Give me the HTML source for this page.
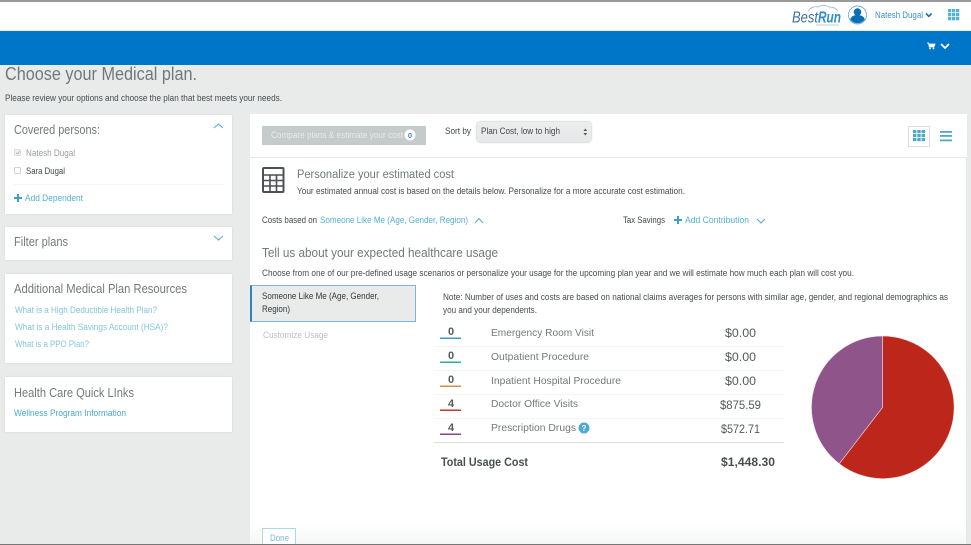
<!DOCTYPE html>
<html lang="en">
<head>
<meta charset="utf-8">
<title>Choose your Medical plan</title>
<style>
html,body{margin:0;padding:0;background:#e9ebeb;}
body{position:relative;width:971px;height:545px;overflow:hidden;font-family:"Liberation Sans",sans-serif;}
.b{position:absolute;box-sizing:border-box;}
.card{background:#fff;left:5px;width:227px;box-shadow:0 0 2px rgba(0,0,0,.1);}
svg{position:absolute;left:0;top:0;filter:blur(.35px);}
text{font-family:"Liberation Sans",sans-serif;}
</style>
</head>
<body>
<div class="b" style="left:0;top:0;width:971px;height:2px;background:#9a9a9a"></div>
<div class="b" style="left:0;top:2px;width:971px;height:28px;background:#fff"></div>
<div class="b" style="left:0;top:31px;width:971px;height:34px;background:#0076c9"></div>
<div class="b card" style="top:115px;height:99px"></div>
<div class="b card" style="top:227px;height:33px"></div>
<div class="b card" style="top:274px;height:89px"></div>
<div class="b card" style="top:377px;height:55px"></div>
<div class="b" style="left:250px;top:114px;width:717px;height:43px;background:#fff"></div>
<div class="b" style="left:250px;top:157px;width:717px;height:388px;background:#fff;border-top:1px solid #e6e8e8;border-right:1px solid #e6e8e8"></div>
<div class="b" style="left:250px;top:525px;width:716px;height:19px;background:linear-gradient(#fff,#f5f6f6)"></div>
<div class="b" style="left:262px;top:126px;width:164px;height:19px;background:#c5caca"></div>
<div class="b" style="left:477px;top:122px;width:114px;height:20px;background:linear-gradient(#eceded,#e6e7e8);border-radius:3px;box-shadow:0 0 2px rgba(0,0,0,.35)"></div>
<div class="b" style="left:908px;top:126px;width:22px;height:21px;border:1px solid #dcdfdf"></div>
<div class="b" style="left:250px;top:285px;width:166px;height:37px;background:#e9ebeb;border:1px solid #7db4e0;border-left:2px solid #2f82c4"></div>
<div class="b" style="left:262px;top:528px;width:34px;height:17px;background:#fff;border:1px solid #a9d9e5"></div>
<div class="b" style="left:0;top:544px;width:971px;height:1px;background:#777"></div>

<svg width="971" height="545" viewBox="0 0 971 545" xmlns="http://www.w3.org/2000/svg">
<!-- header -->
<path d="M808 11c2-3 6-5 10-4 3-2 8-2 11 0 3 0 7 1 9 4" fill="none" stroke="#8fb0cb" stroke-width=".8"/>
<text x="792" y="22.500" font-size="16" font-style="italic" fill="#3f6f9f" textLength="26" lengthAdjust="spacingAndGlyphs">Best</text>
<text x="818" y="22.500" font-size="16" font-style="italic" font-weight="bold" fill="#2b8ec9" textLength="23" lengthAdjust="spacingAndGlyphs">Run</text>
<rect x="816" y="24.500" width="23" height="1" fill="#c5ccd2"/>
<circle cx="857.500" cy="15" r="9" fill="#fff" stroke="#4f98cc" stroke-width=".7"/>
<circle cx="857.500" cy="12" r="3.800" fill="#0a6fb5"/>
<path d="M850.200 19.500c1-3.500 4-4.500 7.300-4.500s6.300 1 7.300 4.500c-1.800 2.500-4.800 3.800-7.300 3.800s-5.500-1.300-7.300-3.800z" fill="#0a6fb5"/>
<text x="875" y="18" font-size="9" fill="#3d8fc4" textLength="48" lengthAdjust="spacingAndGlyphs">Natesh Dugal</text>
<path d="M926 13.500l2.800 2.800 2.800-2.800" fill="none" stroke="#1f73b5" stroke-width="1.700"/>
<g fill="#55b3d2">
<rect x="948" y="9" width="3.300" height="3.300"/><rect x="952" y="9" width="3.300" height="3.300"/><rect x="956" y="9" width="3.300" height="3.300"/>
<rect x="948" y="13" width="3.300" height="3.300"/><rect x="952" y="13" width="3.300" height="3.300"/><rect x="956" y="13" width="3.300" height="3.300"/>
<rect x="948" y="17" width="3.300" height="3.300"/><rect x="952" y="17" width="3.300" height="3.300"/><rect x="956" y="17" width="3.300" height="3.300"/>
</g>
<path d="M927 43h1.500l.8 4h4.700l1-3h-6" fill="#fff" stroke="#fff" stroke-width=".8"/>
<circle cx="930" cy="48.500" r=".9" fill="#fff"/><circle cx="933.500" cy="48.500" r=".9" fill="#fff"/>
<path d="M941 44l4 4 4-4" fill="none" stroke="#fff" stroke-width="1.800"/>

<!-- heading -->
<text x="5" y="80" font-size="18" fill="#72787a" textLength="192" lengthAdjust="spacingAndGlyphs">Choose your Medical plan.</text>
<text x="5" y="101" font-size="9" fill="#474b4d" textLength="277" lengthAdjust="spacingAndGlyphs">Please review your options and choose the plan that best meets your needs.</text>

<!-- covered persons -->
<text x="14" y="134" font-size="12.500" fill="#74797b" textLength="86" lengthAdjust="spacingAndGlyphs">Covered persons:</text>
<path d="M214 128l4.500-4 4.500 4" fill="none" stroke="#56b3cf" stroke-width="1.100"/>
<rect x="14.500" y="149.500" width="6" height="6" rx="1" fill="#f2f2f2" stroke="#d5d5d5" stroke-width=".8"/>
<path d="M16 152.500l1.500 1.500 2.500-3" fill="none" stroke="#aaa" stroke-width=".8"/>
<text x="26" y="156" font-size="9" fill="#9a9ea0" textLength="49" lengthAdjust="spacingAndGlyphs">Natesh Dugal</text>
<rect x="14.500" y="167.500" width="6" height="6" rx="1" fill="#fff" stroke="#c8c8c8" stroke-width=".8"/>
<text x="26" y="174" font-size="9" fill="#44484a" textLength="39" lengthAdjust="spacingAndGlyphs">Sara Dugal</text>
<rect x="14" y="184" width="210" height="1" fill="#f4f5f5"/>
<path d="M14 198h8M18 194v8" stroke="#3aa0cc" stroke-width="2"/>
<text x="25" y="201" font-size="9" fill="#55b0d2" textLength="58" lengthAdjust="spacingAndGlyphs">Add Dependent</text>

<text x="14" y="246" font-size="12.500" fill="#74797b" textLength="54" lengthAdjust="spacingAndGlyphs">Filter plans</text>
<path d="M214 236l4.500 4 4.500-4" fill="none" stroke="#56b3cf" stroke-width="1.100"/>

<text x="14" y="293" font-size="12.500" fill="#74797b" textLength="173" lengthAdjust="spacingAndGlyphs">Additional Medical Plan Resources</text>
<text x="15" y="313" font-size="9" fill="#82c6da" textLength="142" lengthAdjust="spacingAndGlyphs">What is a High Deductible Health Plan?</text>
<text x="15" y="330" font-size="9" fill="#82c6da" textLength="153" lengthAdjust="spacingAndGlyphs">What is a Health Savings Account (HSA)?</text>
<text x="15" y="347" font-size="9" fill="#82c6da" textLength="74" lengthAdjust="spacingAndGlyphs">What is a PPO Plan?</text>

<text x="14" y="397" font-size="12.500" fill="#74797b" textLength="120" lengthAdjust="spacingAndGlyphs">Health Care Quick LInks</text>
<text x="14" y="416" font-size="9" fill="#48a9c9" textLength="112" lengthAdjust="spacingAndGlyphs">Wellness Program Information</text>

<!-- toolbar -->
<text x="271" y="138" font-size="9" fill="#e6e9e9" textLength="132" lengthAdjust="spacingAndGlyphs">Compare plans &amp; estimate your cost</text>
<circle cx="410" cy="135" r="5.500" fill="#fff"/>
<text x="410" y="138" font-size="7.500" font-weight="bold" fill="#3d86c0" text-anchor="middle">0</text>
<text x="445" y="134" font-size="9" fill="#44484a" textLength="26" lengthAdjust="spacingAndGlyphs">Sort by</text>
<text x="481" y="134" font-size="9" fill="#44484a" textLength="79" lengthAdjust="spacingAndGlyphs">Plan Cost, low to high</text>
<path d="M583.500 131l1.800-2.500 1.800 2.500zM583.500 133l1.800 2.500 1.800-2.500z" fill="#555"/>
<g fill="#4fa9c6">
<rect x="913" y="130" width="3.400" height="3.200"/><rect x="917.300" y="130" width="3.400" height="3.200"/><rect x="921.600" y="130" width="3.400" height="3.200"/>
<rect x="913" y="134" width="3.400" height="3.200"/><rect x="917.300" y="134" width="3.400" height="3.200"/><rect x="921.600" y="134" width="3.400" height="3.200"/>
<rect x="913" y="138" width="3.400" height="3.200"/><rect x="917.300" y="138" width="3.400" height="3.200"/><rect x="921.600" y="138" width="3.400" height="3.200"/>
<rect x="940" y="131" width="12" height="1.800"/><rect x="940" y="135" width="12" height="1.800"/><rect x="940" y="139.500" width="12" height="1.800"/>
</g>

<!-- personalize -->
<rect x="263" y="168" width="20.500" height="24" rx="1" fill="none" stroke="#4d5153" stroke-width="2"/>
<path d="M263 175h20.500M263 180.500h20.500M263 186h20.500M270 175v17M276.500 175v17" fill="none" stroke="#4d5153" stroke-width="1.600"/>
<text x="297" y="178" font-size="11.500" fill="#72787a" textLength="157" lengthAdjust="spacingAndGlyphs">Personalize your estimated cost</text>
<text x="297" y="194" font-size="9" fill="#474b4d" textLength="388" lengthAdjust="spacingAndGlyphs">Your estimated annual cost is based on the details below. Personalize for a more accurate cost estimation.</text>
<text x="262" y="223" font-size="9" fill="#44484a" textLength="55" lengthAdjust="spacingAndGlyphs">Costs based on</text>
<text x="320" y="223" font-size="9" fill="#55b0d2" textLength="148" lengthAdjust="spacingAndGlyphs">Someone Like Me (Age, Gender, Region)</text>
<path d="M475 223l4-4.500 4 4.500" fill="none" stroke="#56a9c8" stroke-width="1"/>
<text x="623" y="223" font-size="9" fill="#44484a" textLength="42" lengthAdjust="spacingAndGlyphs">Tax Savings</text>
<path d="M674 220h8M678 216v8" stroke="#3aa0cc" stroke-width="2"/>
<text x="685" y="223" font-size="9" fill="#55b0d2" textLength="64" lengthAdjust="spacingAndGlyphs">Add Contribution</text>
<path d="M757 219l4 4 4-4" fill="none" stroke="#56a9c8" stroke-width="1"/>

<text x="262" y="257" font-size="12.500" fill="#72787a" textLength="236" lengthAdjust="spacingAndGlyphs">Tell us about your expected healthcare usage</text>
<text x="262" y="276" font-size="9" fill="#474b4d" textLength="592" lengthAdjust="spacingAndGlyphs">Choose from one of our pre-defined usage scenarios or personalize your usage for the upcoming plan year and we will estimate how much each plan will cost you.</text>

<!-- tabs -->
<text x="262" y="299" font-size="9" fill="#33373a" textLength="117" lengthAdjust="spacingAndGlyphs">Someone Like Me (Age, Gender,</text>
<text x="262" y="312" font-size="9" fill="#33373a" textLength="28" lengthAdjust="spacingAndGlyphs">Region)</text>
<text x="263" y="338" font-size="9" fill="#bcc0c1" textLength="65" lengthAdjust="spacingAndGlyphs">Customize Usage</text>

<text x="443" y="300" font-size="9" fill="#474b4d" textLength="505" lengthAdjust="spacingAndGlyphs">Note: Number of uses and costs are based on national claims averages for persons with similar age, gender, and regional demographics as</text>
<text x="443" y="313" font-size="9" fill="#474b4d" textLength="94" lengthAdjust="spacingAndGlyphs">you and your dependents.</text>

<!-- rows -->
<g font-size="11" font-weight="bold" fill="#55595b" text-anchor="middle">
<text x="451" y="335">0</text><text x="451" y="359">0</text><text x="451" y="383">0</text><text x="451" y="407">4</text><text x="451" y="431">4</text>
</g>
<rect x="440" y="337.500" width="21" height="1.500" fill="#3a9cc0"/>
<rect x="440" y="361.500" width="21" height="1.500" fill="#2eb08e"/>
<rect x="440" y="385.500" width="21" height="1.500" fill="#e08a4a"/>
<rect x="440" y="409.500" width="21" height="1.500" fill="#c0392b"/>
<rect x="440" y="433.500" width="21" height="1.500" fill="#8e4585"/>
<g fill="#f3f4f4">
<rect x="434" y="346" width="350" height="1"/><rect x="434" y="370" width="350" height="1"/><rect x="434" y="394" width="350" height="1"/><rect x="434" y="418" width="350" height="1"/>
</g>
<rect x="434" y="442" width="350" height="1" fill="#dcdfdf"/>
<g font-size="10.500" fill="#74787a">
<text x="491" y="336" textLength="103" lengthAdjust="spacingAndGlyphs">Emergency Room Visit</text>
<text x="491" y="360" textLength="98" lengthAdjust="spacingAndGlyphs">Outpatient Procedure</text>
<text x="491" y="384" textLength="130" lengthAdjust="spacingAndGlyphs">Inpatient Hospital Procedure</text>
<text x="491" y="407" textLength="87" lengthAdjust="spacingAndGlyphs">Doctor Office Visits</text>
<text x="491" y="431" textLength="85" lengthAdjust="spacingAndGlyphs">Prescription Drugs</text>
</g>
<circle cx="584" cy="428" r="5.500" fill="#4fa8d8"/>
<text x="584" y="431" font-size="8" font-weight="bold" fill="#fff" text-anchor="middle">?</text>
<g font-size="11.500" fill="#55595b">
<text x="725" y="337" textLength="31" lengthAdjust="spacingAndGlyphs">$0.00</text>
<text x="725" y="361" textLength="31" lengthAdjust="spacingAndGlyphs">$0.00</text>
<text x="725" y="385" textLength="31" lengthAdjust="spacingAndGlyphs">$0.00</text>
<text x="720" y="409" textLength="41" lengthAdjust="spacingAndGlyphs">$875.59</text>
<text x="721" y="433" textLength="39" lengthAdjust="spacingAndGlyphs">$572.71</text>
</g>
<text x="441" y="466" font-size="11.500" font-weight="bold" fill="#4a4e50" textLength="87" lengthAdjust="spacingAndGlyphs">Total Usage Cost</text>
<text x="721" y="466" font-size="11.500" font-weight="bold" fill="#4a4e50" textLength="54" lengthAdjust="spacingAndGlyphs">$1,448.30</text>

<!-- pie -->
<path d="M882.700 407.300L839.300 463.800A71.300 71.300 0 0 1 882.700 336Z" fill="#8f5489" stroke="#f3e4ee" stroke-width=".6"/>
<path d="M882.700 407.300L882.700 336A71.300 71.300 0 1 1 839.300 463.800Z" fill="#bd261b" stroke="#f3dcd8" stroke-width=".6"/>

<text x="270" y="541" font-size="9" fill="#7fb9cc" textLength="19" lengthAdjust="spacingAndGlyphs">Done</text>
</svg>
</body>
</html>
